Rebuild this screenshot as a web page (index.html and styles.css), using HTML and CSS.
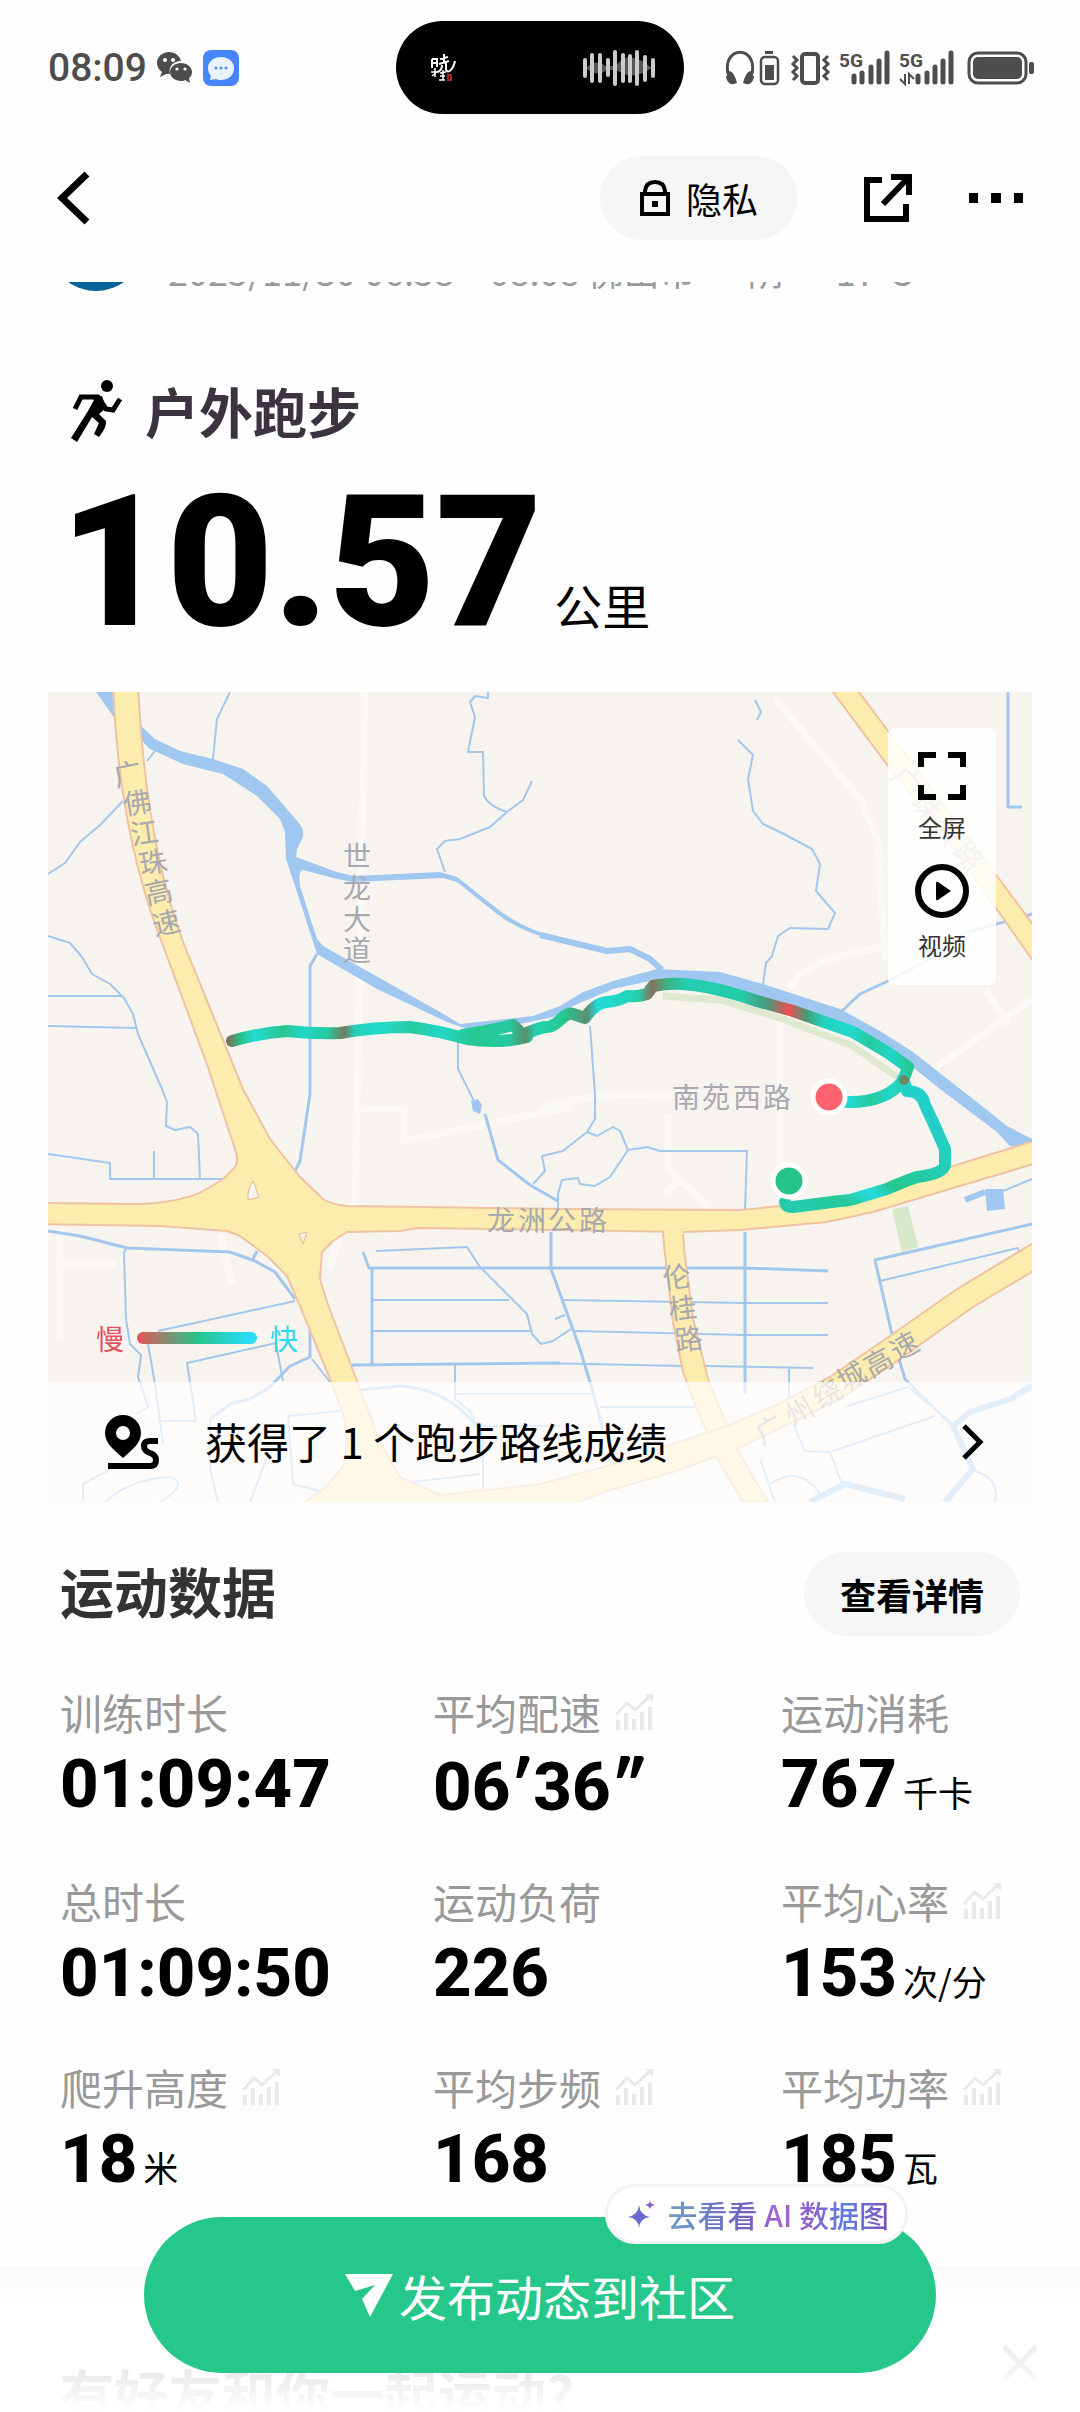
FILE: index.html
```html
<!DOCTYPE html>
<html lang="zh-CN">
<head>
    <meta charset="UTF-8">
    <meta name="viewport" content="width=device-width, initial-scale=1.0">
    <title>户外跑步</title>
    <link rel="stylesheet" href="styles.css">
</head>
<body>

    <svg width="0" height="0" class="symbols">
        <symbol id="trend" viewBox="0 0 38 36">
            <path d="M1 21L12 9L20 16L35 2" fill="none" stroke="currentColor" stroke-width="3"/>
            <path d="M38 0V8L30 0z" fill="currentColor"/>
            <path d="M3 26V36M11 19V36M19 25V36M27 18V36M35 13V36" fill="none" stroke="currentColor" stroke-width="4"/>
        </symbol>
    </svg>

    <div class="screen">
        <div class="status-bar">
            <div class="status-left">
                <span class="time">08:09</span>
                <svg width="36" height="31" viewBox="0 0 36 31">
                    <path d="M12 0C5 0 0 5 0 11C0 15 2 18 5 20L3 25L9 22C10 22 12 22 13 22C11 14 17 9 24 9C23 4 18 0 12 0z" fill="#4d4d4d"/>
                    <path d="M24 11C18 11 13 15 13 20C13 25 18 29 24 29C26 29 27 29 28 28L33 31L32 26C34 25 35 22 35 20C35 15 30 11 24 11z" fill="#4d4d4d"/>
                    <g fill="#fff"><circle cx="8" cy="8" r="2"/><circle cx="16" cy="8" r="2"/><circle cx="20" cy="17" r="1.6"/><circle cx="28" cy="17" r="1.6"/></g>
                </svg>
                <svg width="36" height="36" viewBox="0 0 36 36">
                    <rect width="36" height="36" rx="8" fill="#4685f8"/>
                    <path d="M18 7C10 7 5 12 5 18C5 21 6 24 8 26L7 30L13 29C15 30 16 30 18 30C26 30 31 25 31 18C31 12 26 7 18 7z" fill="#e9f3ff"/>
                    <g fill="#5b90e8"><circle cx="13" cy="18" r="1.6"/><circle cx="18" cy="18" r="1.6"/><circle cx="23" cy="18" r="1.6"/></g>
                </svg>
            </div>
            <div class="island">
                <svg width="26" height="30" viewBox="0 0 26 30" fill="none" stroke="#fff" stroke-width="2">
                    <path d="M2 6V15M2 6H7V14M2 10H7M10 6L18 4M14 1V9M9 11L19 8M12 12C12 16 10 18 8 19M16 10V17C18 21 23 17 25 8" />
                    <path d="M1 19H8M5 15V24M2 23L8 18M10 20L16 19M13 17V27M9 27H15M10 23H15" stroke-width="1.5"/>
                    <path d="M18 22H21V27H18z" stroke="#b3261e"/>
                </svg>
                <svg width="74" height="36" viewBox="0 0 74 36">
                    <path d="M4 18Q14 8 24 16Q34 18 40 9Q52 3 70 18Q52 30 40 23Q32 18 24 21Q14 27 4 18z" fill="#555"/>
                    <path d="M3 10V26M10 5V31M18 5V31M26 10V25M33 2V34M41 5V31M48 6V31M55 2V34M63 7V30M71 10V26" stroke="#ccc" stroke-width="4" stroke-linecap="round"/>
                </svg>
            </div>
            <div class="status-right">
                <svg width="312" height="40" viewBox="724 48 312 40" fill="none" stroke="#4d4d4d">
                    <path d="M728 74C722 45 758 45 752 74" stroke-width="3"/>
                    <path d="M729 71Q734 71 737 83Q728 87 726 77zM751 71Q746 71 743 83Q752 87 754 77z" fill="#4d4d4d" stroke="none"/>
                    <rect x="761" y="57" width="17" height="27" rx="4" stroke-width="2.5"/>
                    <path d="M765 52.500H773" stroke-width="3"/>
                    <rect x="765" y="65" width="9" height="15" fill="#4d4d4d" stroke="none"/>
                    <rect x="802" y="54" width="16" height="29" rx="3" stroke-width="4"/>
                    <path d="M793 56L797 60L793 64L797 68L793 72L797 76L793 80M828 56L824 60L828 64L824 68L828 72L824 76L828 80" stroke-width="3"/>
                    <text class="signal" x="839" y="67">5G</text>
                    <text class="signal" x="899" y="67">5G</text>
                    <path d="M854 76V82M862 73V82M871 67V82M879 61V82M887 53V82M918 76V82M927 73V82M935 67V82M943 61V82M951 53V82" stroke-width="5" stroke-linecap="round"/>
                    <path d="M905 74V84L900 79M909 84V74L914 79" stroke-width="2"/>
                    <rect x="969" y="53" width="57" height="30" rx="9" stroke-width="3"/>
                    <rect x="973" y="57" width="49" height="22" rx="5" fill="#4d4d4d" stroke="none"/>
                    <rect x="1029" y="62" width="5" height="12" rx="2" fill="#4d4d4d" stroke="none"/>
                </svg>
            </div>
        </div>

        <header class="app-bar">
            <button class="icon-button" aria-label="返回">
                <svg width="34" height="54" viewBox="0 0 34 54"><path d="M30 3L5 27L30 51" fill="none" stroke="#000" stroke-width="7"/></svg>
            </button>
            <button class="pill privacy">
                <svg width="30" height="36" viewBox="0 0 30 36" fill="none" stroke="#000" stroke-width="4"><path d="M2 14H28V34H2zM5 14V11Q6 2 15 2Q24 2 25 11V14"/><path d="M12 24H18" stroke-width="6"/></svg>
                <span>隐私</span>
            </button>
            <button class="icon-button share" aria-label="分享">
                <svg width="48" height="48" viewBox="0 0 48 48" fill="none" stroke="#000" stroke-width="6"><path d="M18 6H3V45H42V30M27 3H45V21M44 4L19 30"/></svg>
            </button>
            <button class="icon-button" aria-label="更多">
                <svg width="54" height="10" viewBox="0 0 54 10"><path d="M0 0H9V10H0zM22 0H32V10H22zM45 0H54V10H45z"/></svg>
            </button>
        </header>

        <div class="meta">
            <div class="avatar"></div>
            <p>2025/11/30 06:58 – 08:08 佛山市 · 阴 · 17°C</p>
        </div>

        <section class="summary">
            <h1>
                <svg width="52" height="62" viewBox="0 0 52 62">
                    <circle cx="36" cy="6" r="6"/>
                    <path d="M4 29L10 17H27L35 29L42 30L49 19" fill="none" stroke="#000" stroke-width="5"/>
                    <path d="M21 18L31 16L35 28L28 34L35 41Q36 47 28 57L23 54L28 43L21 37L6 62L0 58L17 31L23 20z"/>
                </svg>
                <span>户外跑步</span>
            </h1>
            <p class="distance"><strong>10.57</strong><span>公里</span></p>
        </section>

        <section class="map">
            <svg class="map-canvas" viewBox="48 693 984 810">
                <defs>
                    <linearGradient id="pace" gradientUnits="userSpaceOnUse" x1="228" y1="0" x2="912" y2="0">
                        <stop offset="0" stop-color="#79705a"/>
                        <stop offset=".02" stop-color="#25c68f"/>
                        <stop offset=".04" stop-color="#22dbd0"/>
                        <stop offset=".08" stop-color="#2bc492"/>
                        <stop offset=".11" stop-color="#22d6c6"/>
                        <stop offset=".145" stop-color="#24caa0"/>
                        <stop offset=".17" stop-color="#727a60"/>
                        <stop offset=".185" stop-color="#22d0b6"/>
                        <stop offset=".22" stop-color="#24dacb"/>
                        <stop offset=".27" stop-color="#24cba0"/>
                        <stop offset=".31" stop-color="#23d6c6"/>
                        <stop offset=".36" stop-color="#25c793"/>
                        <stop offset=".41" stop-color="#24cba0"/>
                        <stop offset=".435" stop-color="#58916c"/>
                        <stop offset=".45" stop-color="#24d1b2"/>
                        <stop offset=".49" stop-color="#25c890"/>
                        <stop offset=".525" stop-color="#5a8f74"/>
                        <stop offset=".54" stop-color="#22dcd8"/>
                        <stop offset=".6" stop-color="#25cfac"/>
                        <stop offset=".62" stop-color="#8a6f5c"/>
                        <stop offset=".64" stop-color="#3fb080"/>
                        <stop offset=".67" stop-color="#23ceb0"/>
                        <stop offset=".75" stop-color="#24cbaa"/>
                        <stop offset=".79" stop-color="#4d967a"/>
                        <stop offset=".82" stop-color="#f04d52"/>
                        <stop offset=".845" stop-color="#479a74"/>
                        <stop offset=".87" stop-color="#22d2bd"/>
                        <stop offset=".91" stop-color="#22d8d0"/>
                        <stop offset=".94" stop-color="#25cb9f"/>
                        <stop offset=".97" stop-color="#22d6c8"/>
                        <stop offset="1" stop-color="#25c68c"/>
                    </linearGradient>
                    <linearGradient id="pace-loop" gradientUnits="userSpaceOnUse" x1="900" y1="1070" x2="810" y2="1210">
                        <stop offset="0" stop-color="#22cfd0"/>
                        <stop offset=".35" stop-color="#24cfba"/>
                        <stop offset=".62" stop-color="#25c68d"/>
                        <stop offset=".72" stop-color="#24dce0"/>
                        <stop offset=".85" stop-color="#25c998"/>
                        <stop offset="1" stop-color="#24cbab"/>
                    </linearGradient>
                </defs>
                <rect x="48" y="693" width="984" height="810" fill="#f7f4ef"/>

                <!-- side streets -->
                <g class="street">
                    <path d="M365 693L355 1207M775 700L860 800L878 840L885 960M780 1010V1165M790 990Q800 960 885 948M1032 1000L920 1080M985 990L1008 1025M355 1110H404V1142L570 1108M540 1110Q600 1090 672 1098M668 1115V1170L710 1208M665 1195Q680 1170 700 1200M60 1230V1340M60 1265H115M220 1235L232 1285M340 1235L330 1270"/>
                </g>

                <!-- parks -->
                <path d="M663 997L720 1001L780 1019L853 1047L900 1080" class="park-line"/>
                <path d="M892 1210L908 1207L918 1248L902 1253z" fill="#d8e7c9"/>

                <!-- rivers -->
                <path class="water" d="M96 693H113L142 728L155 740L180 752L213 760L243 770L267 787L298 823Q306 832 302 840L297 850L296 858L337 873L353 877L440 873L457 878L500 912Q525 930 560 940V943Q520 933 497 915L457 883L443 879L353 883L337 880L303 871Q298 872 300 887L317 940L323 947L360 968L440 1013L460 1025L533 1017L560 1007L583 993L613 982L657 970L720 973L763 985L840 1010L880 1032L913 1053L973 1100L1007 1127L1032 1140V1148L1010 1147L997 1133L940 1090L890 1050L853 1032L773 1002L707 984L663 979L613 990L573 1007L553 1018L520 1025L467 1030L447 1023L377 990L317 955L297 893L286 860L285 833L280 820L257 797L223 775L183 765L150 750L143 743L113 717z"/>
                <path class="water" d="M985 1190H1003L1005 1210L987 1212zM471 1102L478 1100L482 1106L480 1115L473 1112z"/>
                <g class="stream wide">
                    <path d="M540 936L607 952L630 950L650 960L662 971"/>
                    <path d="M1032 1387L1010 1400L970 1413L953 1427L973 1470L945 1503M810 1503L845 1485L905 1500M965 1201L985 1193"/>
                </g>
                <g class="stream medium">
                    <path d="M317 955L310 967V1095L300 1162L295 1172M842 1012L860 995L888 982L930 960L965 934L1032 915M1008 693V808H1022"/>
                    <path d="M48 1232L80 1237L127 1249L230 1253L255 1262L275 1273L295 1300M257 1252L252 1262M363 1253L369 1269H745L828 1272M372 1269V1365M551 1233V1270L563 1303L580 1350L592 1390L603 1430M745 1233V1395M352 1366L560 1364M1032 1225L875 1261L893 1340L905 1380L950 1425"/>
                    <path d="M310 1330V1358L290 1367L270 1388L250 1400L230 1405L210 1420M360 1391L400 1387Q450 1390 478 1430M485 1115L498 1161L530 1186L558 1202"/>
                </g>
                <g class="stream">
                    <path d="M48 875L65 864L80 843L100 826L123 802M48 937L70 944L82 958L92 975L110 985L124 999L133 1015L138 1035L162 1090L167 1103L166 1127L175 1131L190 1128L198 1135L200 1180M48 997H122M48 1027L137 1029M48 1155L110 1164V1180H222M154 1152V1180M230 693L217 720L213 760M155 752L147 762"/>
                    <path d="M488 693V699L475 697L470 703L475 718L468 753H483L484 797Q490 808 507 813L490 828L460 840L445 842L437 850L445 873M507 813L523 801L532 782M755 701L761 713L757 721M738 741L753 756L748 780L753 812L763 825L782 834L812 850L820 865L816 892L835 914L828 930L790 929L778 937L772 957L766 964L763 985"/>
                    <path d="M590 1027L595 1095V1120L587 1133L563 1152L542 1157L545 1172L533 1185M587 1133L597 1137L613 1128L620 1132L628 1151L647 1148L660 1152H747L745 1210M628 1151L610 1178L595 1187L580 1185L578 1179L562 1181L558 1195V1210M458 1043V1070L477 1108M1003 1192L1032 1180"/>
                    <path d="M127 1249L124 1253L126 1320L130 1345L141 1356L138 1378L148 1408L136 1415M158 1332L295 1302M148 1345L155 1385L163 1445M276 1344L187 1364L196 1422H160M276 1345L283 1382M312 1360L330 1383"/>
                    <path d="M376 1252L467 1248L480 1268L510 1298L527 1315L532 1335L541 1345L553 1342L571 1330M372 1301H509M372 1332H531M562 1301L745 1304H828M575 1332L745 1336H828M540 1364L683 1367M705 1367L813 1369M789 1369V1400M880 1282L1018 1249L1020 1256M555 1320L565 1316"/>
                    <path d="M455 1366V1400L470 1412L483 1440V1490M455 1395H592M600 1408H695M480 1427H560M412 1483L480 1475M953 1425L908 1388L845 1408M793 1425L805 1452L830 1453L842 1485M833 1452L935 1417M760 1460L775 1503M770 1485Q800 1465 820 1495M975 1472Q1000 1480 995 1503M340 1412L288 1417L293 1485L320 1492M83 1503V1485L120 1465M105 1503Q130 1480 170 1478Q190 1485 160 1503M210 1420V1470L218 1503M250 1503L270 1450"/>
                </g>

                <!-- roads -->
                <g class="road">
                    <path d="M663 1233L664 1247L673 1323L683 1373L697 1410L718 1460L743 1503H768L737 1450L727 1427L708 1380L693 1320L684 1250L683 1233z"/>
                    <path d="M1040 1240L957 1290L890 1337L830 1378L783 1403L727 1427L673 1445L607 1467L540 1485Q480 1492 440 1496L400 1478L380 1443L360 1390L327 1303L320 1280L322 1253L333 1242L347 1233L400 1232L417 1229L560 1231L683 1233L740 1231L827 1223L873 1213L1040 1163V1140L950 1168L890 1192L833 1202L740 1211L560 1210L347 1207Q330 1205 323 1200L300 1178L270 1140L243 1090L183 943Q145 840 138 685H113Q118 820 155 925L208 1068L215 1090L235 1150Q240 1165 233 1170L223 1180L207 1190Q185 1203 140 1205L40 1204V1225L160 1227L227 1232L240 1237L267 1257L287 1277L300 1307L330 1380L340 1407Q352 1435 343 1467L327 1487L295 1510H560L607 1492L673 1473L737 1450L840 1400L890 1367L973 1308L1040 1268z"/>
                    <path d="M827 685L888 767L957 853L1040 972V935L977 850L888 732L853 685z"/>
                </g>
                <path d="M664 1235H683V1231H664zM709 1437L727 1428L737 1450L719 1460z" fill="#fcecae"/>
                <g fill="#f7f4ef" stroke="#e2b98f">
                    <path d="M253 1182L259 1198L248 1201Q247 1190 253 1182zM299 1235L307 1233L303 1245z"/>
                </g>

                <!-- place labels -->
                <g class="label">
                    <text x="116 125 132 141 147 155" y="788 816 846 876 906 937" rotate="-12 -9 -8 -10 -12 -13">广佛江珠高速</text>
                    <text x="343 343 343 343" y="868 900 931 962">世龙大道</text>
                    <text x="672 702 733 763" y="1109">南苑西路</text>
                    <text x="487 518 548 579" y="1232">龙洲公路</text>
                    <text x="664 670 676" y="1290 1321 1352" rotate="-7">伦桂路</text>
                    <text x="762 792 820 844 871 897" y="1446 1428 1410 1393 1379 1363" rotate="-29">广州绕城高速</text>
                    <text x="889 909 930 952" y="778 804 828 853" rotate="50">广珠公路</text>
                </g>

                <!-- running track -->
                <g class="track" stroke="url(#pace)">
                    <path d="M232 1042Q260 1034 287 1032Q315 1035 340 1034Q375 1028 410 1028Q440 1032 467 1040Q500 1045 527 1038M463 1036Q490 1032 513 1026L523 1036Q535 1030 545 1028Q552 1029 560 1021T573 1015L585 1019Q595 1004 607 1003T627 997Q638 998 647 995L653 987Q668 984 683 985Q713 987 757 1002L793 1012L853 1033L887 1053L908 1068L903 1082Q885 1104 847 1103"/>
                </g>
                <path class="track" stroke="url(#pace-loop)" d="M903 1080L907 1092Q922 1092 925 1106L933 1123L945 1150V1166Q943 1175 917 1178Q905 1182 887 1190L860 1198Q850 1202 840 1202L793 1208Q786 1208 785 1203"/>
                <circle cx="904" cy="1081" r="5" fill="#6b8a5e"/>
                <g stroke="#fff" stroke-width="5">
                    <circle cx="829" cy="1098" r="16" fill="#ff6370"/>
                    <circle cx="789" cy="1182" r="16" fill="#26c488"/>
                </g>
            </svg>

            <div class="map-tools">
                <button>
                    <svg width="48" height="48" viewBox="0 0 48 48" fill="none" stroke="#000" stroke-width="6"><path d="M3 15V3H18M30 3H45V15M45 33V45H30M18 45H3V33"/></svg>
                    全屏
                </button>
                <button>
                    <svg width="54" height="54" viewBox="0 0 54 54"><circle cx="27" cy="27" r="24" fill="none" stroke="#000" stroke-width="6"/><path d="M21 19Q21 17 23 18L36 27L23 36Q21 37 21 35z"/></svg>
                    视频
                </button>
            </div>

            <div class="legend"><span class="slow">慢</span><i></i><span class="fast">快</span></div>

            <a href="#routes" class="route-link">
                <svg width="54" height="54" viewBox="0 0 54 54">
                    <path fill-rule="evenodd" d="M18 0A18 18 0 0 1 36 18C36 28 28 34 18 43C8 34 0 28 0 18A18 18 0 0 1 18 0zM18 11A7 7 0 0 0 18 25A7 7 0 0 0 18 11z"/>
                    <path d="M53 26H45Q39 26 39 31Q39 36 45 38Q51 40 51 45Q51 51 45 51H3" fill="none" stroke="#000" stroke-width="6"/>
                </svg>
                <span>获得了 1 个跑步路线成绩</span>
                <svg width="22" height="36" viewBox="0 0 22 36"><path d="M2 2L18 18L2 34" fill="none" stroke="#000" stroke-width="5"/></svg>
            </a>
        </section>

        <section class="data">
            <div class="data-head">
                <h2>运动数据</h2>
                <button class="pill details">查看详情</button>
            </div>
            <dl class="stats">
                <div><dt>训练时长</dt><dd>01:09:47</dd></div>
                <div><dt>平均配速 <svg><use href="#trend"/></svg></dt><dd>06<span class="prime">′</span>36<span class="prime">″</span></dd></div>
                <div><dt>运动消耗</dt><dd>767<small>千卡</small></dd></div>
                <div><dt>总时长</dt><dd>01:09:50</dd></div>
                <div><dt>运动负荷</dt><dd>226</dd></div>
                <div><dt>平均心率 <svg><use href="#trend"/></svg></dt><dd>153<small>次/分</small></dd></div>
                <div><dt>爬升高度 <svg><use href="#trend"/></svg></dt><dd>18<small>米</small></dd></div>
                <div><dt>平均步频 <svg><use href="#trend"/></svg></dt><dd>168</dd></div>
                <div><dt>平均功率 <svg><use href="#trend"/></svg></dt><dd>185<small>瓦</small></dd></div>
            </dl>
        </section>

        <section class="friends">
            <h2>有好友和你一起运动?</h2>
            <button class="icon-button" aria-label="关闭">
                <svg width="36" height="36" viewBox="0 0 36 36"><path d="M2 2L34 34M34 2L2 34" stroke="#999" stroke-width="5"/></svg>
            </button>
        </section>

        <div class="fade"></div>
        <div class="publish">
            <button class="publish-button">
                <svg width="48" height="43" viewBox="0 0 48 43"><path d="M0 0H48L25 43L17 25L30 11L10 17z" fill="#fff"/></svg>
                <span>发布动态到社区</span>
            </button>
            <a href="#ai" class="ai-tip">
                <svg width="28" height="28" viewBox="0 0 28 28"><path d="M12 5Q13 15 23 17Q13 18 12 28Q11 18 1 17Q11 15 12 5z" fill="#6a6bd0"/><path d="M23 0Q23 4 28 5Q23 6 23 10Q23 6 18 5Q23 4 23 0z" fill="#8a62cc"/></svg>
                <span>去看看 AI 数据图</span>
            </a>
        </div>
    </div>

</body>
</html>
```

FILE: styles.css
```css
* {
    margin: 0;
    padding: 0;
    box-sizing: border-box;
}

body {
    background-color: #fefefe;
    font-family: "Noto Sans CJK SC", sans-serif;
    color: #000;
}

button {
    border: none;
    background: none;
    font: inherit;
    color: inherit;
    cursor: pointer;
}

a {
    color: inherit;
    text-decoration: none;
}

svg {
    display: block;
    flex-shrink: 0;
}

.symbols {
    position: absolute;
}

.screen {
    position: relative;
    height: 100vh;
    overflow: hidden;
}

/* status bar */
.status-bar {
    display: grid;
    grid-template-columns: 1fr auto 1fr;
    align-items: center;
    padding: 21px 44px 0;
}

.status-left {
    display: flex;
    align-items: center;
    gap: 10px;
    padding-left: 4px;
}

.time {
    font-family: Roboto, sans-serif;
    font-weight: 500;
    font-size: 39px;
    color: #4d4d4d;
}

.island {
    display: flex;
    justify-content: space-between;
    align-items: center;
    width: 288px;
    height: 93px;
    padding: 0 28px 0 34px;
    border-radius: 47px;
    background-color: #000;
}

.status-right {
    display: flex;
    justify-content: flex-end;
}

.signal {
    font-family: Roboto, sans-serif;
    font-weight: bold;
    font-size: 19px;
    fill: #4d4d4d;
    stroke: none;
}

/* app bar */
.app-bar {
    display: flex;
    align-items: center;
    height: 84px;
    margin-top: 42px;
    padding: 0 57px;
}

.pill {
    display: flex;
    align-items: center;
    justify-content: center;
    height: 84px;
    border-radius: 42px;
    background-color: #f6f6f6;
    font-size: 36px;
}

.privacy {
    gap: 16px;
    width: 198px;
    margin-left: auto;
}

.share {
    margin: 0 57px 0 66px;
}

/* scrolled-away author line */
.meta {
    display: flex;
    align-items: flex-end;
    gap: 24px;
    height: 9px;
    margin-top: 42px;
    padding: 0 48px;
    overflow: hidden;
    font-size: 36px;
    line-height: 42px;
    color: #999;
    white-space: nowrap;
}

.avatar {
    flex-shrink: 0;
    width: 96px;
    height: 96px;
    border-radius: 50%;
    background-color: #06649b;
}

/* summary */
.summary {
    padding: 81px 60px 0;
}

h1 {
    display: flex;
    align-items: center;
    gap: 22px;
    padding-left: 11px;
    font-size: 54px;
    font-weight: 700;
    line-height: 78px;
    color: #3b3440;
}

.distance {
    display: flex;
    align-items: baseline;
    gap: 12px;
    margin-top: 32px;
}

.distance strong {
    font-family: Roboto, sans-serif;
    font-weight: 900;
    font-size: 184px;
    line-height: 160px;
}

.distance span {
    font-size: 48px;
    line-height: 48px;
}

/* map */
.map {
    position: relative;
    margin: 50px 48px 0;
}

.map-canvas {
    width: 100%;
    height: auto;
}

.street path {
    fill: none;
    stroke: #fbf9f6;
    stroke-width: 7;
}

.park-line {
    fill: none;
    stroke: #dfe9cf;
    stroke-width: 7;
}

.water {
    fill: #a0c7f0;
}

.stream path {
    fill: none;
    stroke: #a3c7ec;
    stroke-width: 2;
    stroke-linejoin: round;
}

.medium path {
    stroke-width: 3;
}

.wide path {
    stroke: #a0c7f0;
    stroke-width: 6;
}

.road path {
    fill: #fcecae;
    stroke: #efc3a2;
    stroke-width: 2;
    stroke-linejoin: round;
}

.label {
    font-size: 28px;
    fill: #a7a8b0;
}

.track {
    fill: none;
    stroke-width: 12;
    stroke-linecap: round;
    stroke-linejoin: round;
}

.map-tools {
    position: absolute;
    top: 36px;
    right: 36px;
    display: flex;
    flex-direction: column;
    align-items: center;
    gap: 16px;
    width: 108px;
    padding: 24px 0 19px;
    border-radius: 6px;
    background-color: rgba(255, 255, 255, 0.85);
}

.map-tools button {
    display: flex;
    flex-direction: column;
    align-items: center;
    gap: 6px;
    font-size: 24px;
    line-height: 42px;
    color: #333;
}

.legend {
    position: absolute;
    left: 48px;
    bottom: 144px;
    display: flex;
    align-items: center;
    gap: 13px;
    font-size: 28px;
    line-height: 40px;
}

.legend i {
    width: 120px;
    height: 12px;
    border-radius: 6px;
    background: linear-gradient(90deg, #e9535a, #26c488 50%, #2adcf2 90%);
}

.slow {
    color: #e5525a;
}

.fast {
    color: #2cdaf0;
}

.route-link {
    position: absolute;
    left: 0;
    right: 0;
    bottom: 0;
    display: flex;
    align-items: center;
    height: 120px;
    padding: 0 48px 0 57px;
    background-color: rgba(255, 255, 255, 0.7);
    font-size: 42px;
}

.route-link span {
    flex: 1;
    margin-left: 46px;
    padding-bottom: 4px;
}

/* workout data */
.data {
    padding: 50px 60px 0;
}

.data-head {
    display: flex;
    justify-content: space-between;
    align-items: flex-start;
}

h2 {
    font-size: 54px;
    font-weight: 700;
    line-height: 78px;
    color: #333;
}

.details {
    width: 216px;
    font-weight: 700;
}

.stats {
    display: grid;
    grid-template-columns: 373fr 348fr 239fr;
    row-gap: 42px;
    margin-top: 46px;
    white-space: nowrap;
}

.stats dt {
    display: flex;
    align-items: center;
    gap: 14px;
    font-size: 42px;
    line-height: 60px;
    color: #999;
}

.stats svg {
    width: 38px;
    height: 36px;
    color: #e9e9e9;
}

.stats dd {
    font-family: Roboto, "Noto Sans CJK SC", sans-serif;
    font-weight: 800;
    font-size: 67px;
    line-height: 84px;
}

.prime {
    font-family: Lato, sans-serif;
    font-weight: 900;
}

.stats small {
    margin-left: 6px;
    font-family: "Noto Sans CJK SC", sans-serif;
    font-weight: 400;
    font-size: 35px;
    line-height: 36px;
}

/* friends card below the data */
.friends {
    display: flex;
    justify-content: space-between;
    margin-top: 66px;
    padding: 78px 42px 0 60px;
    background: linear-gradient(#f4f4f4, #fefefe 40px);
}

.friends h2 {
    padding-top: 9px;
}

.friends .icon-button {
    align-self: flex-start;
}

.fade {
    position: absolute;
    left: 0;
    right: 0;
    bottom: 0;
    height: 228px;
    background: linear-gradient(rgba(255, 255, 255, 0), rgba(255, 255, 255, 0.85) 75%, #fff);
}

.publish {
    position: absolute;
    left: 144px;
    right: 144px;
    bottom: 39px;
}

.publish-button {
    display: flex;
    align-items: center;
    justify-content: center;
    gap: 6px;
    width: 100%;
    height: 156px;
    border-radius: 78px;
    background-color: #26c78b;
    color: #fff;
    font-size: 48px;
}

.ai-tip {
    position: absolute;
    top: -33px;
    right: 28px;
    display: flex;
    align-items: center;
    gap: 13px;
    height: 60px;
    padding: 0 16px 0 19px;
    border: 3px solid #f3f3f3;
    border-radius: 30px;
    background-color: #fff;
    font-size: 30px;
    font-weight: 500;
}

.ai-tip span {
    background: linear-gradient(90deg, #6f9fc4, #6f60bd 35%, #a866d0 50%, #8a62cc 65%, #5f7de0 80%, #7a52b8);
    -webkit-background-clip: text;
    background-clip: text;
    color: transparent;
}
```
